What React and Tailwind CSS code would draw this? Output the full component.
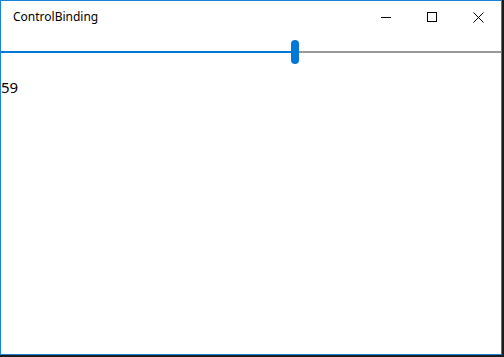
import React from 'react';

const value = 59;

const App = () => {
  const pct = 290 / 500;

  return (
    <div className="w-[504px] h-[357px] bg-[#1c1c1c] overflow-hidden">
      <div className="w-[502px] h-[355px] border border-[#1883d7] bg-white flex flex-col font-['Noto_Sans','Open_Sans',sans-serif] text-black">
        {/* Title bar */}
        <div className="h-[32px] flex items-center shrink-0">
          <span className="pl-[12px] text-[12px] flex-1">ControlBinding</span>
          <div className="flex h-full">
            <div className="w-[46px] h-full flex items-center justify-center">
              <div className="w-[10px] h-px bg-black" />
            </div>
            <div className="w-[46px] h-full flex items-center justify-center">
              <div className="w-[10px] h-[10px] border border-black" />
            </div>
            <div className="w-[46px] h-full flex items-center justify-center">
              <svg width="11" height="11" viewBox="0 0 11 11">
                <path d="M0.5 0.5 L10.5 10.5 M10.5 0.5 L0.5 10.5" stroke="#000" strokeWidth="1" />
              </svg>
            </div>
          </div>
        </div>

        {/* Slider */}
        <div className="relative h-[38px] flex items-center">
          <div className="flex w-full h-[2px]">
            <div className="h-full bg-[#0078d7]" style={{ width: `${pct * 100}%` }} />
            <div className="h-full flex-1 bg-[#999999]" />
          </div>
          <div
            className="absolute top-[7px] w-[8px] h-[24px] rounded-[4px] bg-[#0078d7]"
            style={{ left: `${pct * 500}px` }}
          />
        </div>

        <div className="text-[15px] leading-[20px] pt-[6px]">{value}</div>
      </div>
    </div>
  );
};

export default App;
